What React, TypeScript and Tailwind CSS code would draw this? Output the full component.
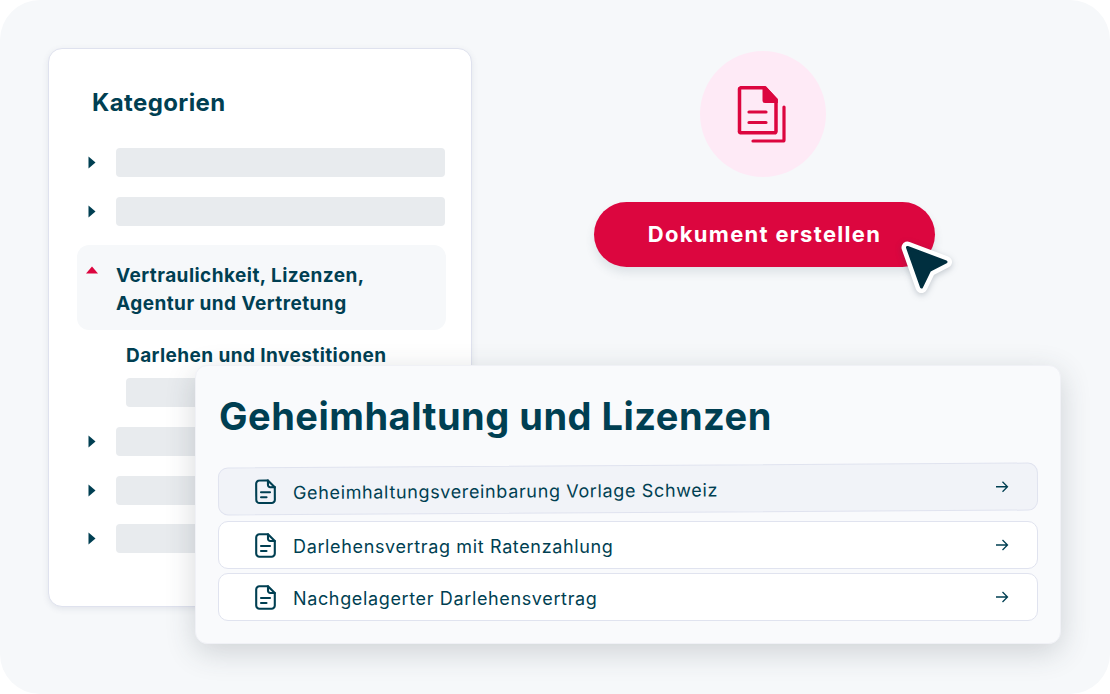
const INK = 'text-[#003f52]'

function Caret() {
  return (
    <svg width="8" height="13" viewBox="0 0 8 13" className="shrink-0">
      <path d="M0.5 0.5 L7.5 6.5 L0.5 12.5 Z" fill="#003f52" />
    </svg>
  )
}

function SkeletonRow() {
  return (
    <div className="flex items-center h-[29px] pl-[39px] pr-[26px]">
      <div className="w-[28px]">
        <Caret />
      </div>
      <div className="flex-1 h-[29px] rounded-[4px] bg-[#e8ebee]" />
    </div>
  )
}

function CategoriesCard() {
  return (
    <div className="w-[424px] h-[559px] shrink-0 rounded-[14px] bg-white border border-[#dfe2ee] shadow-[0_2px_6px_rgba(60,70,110,0.1)] pt-[37px]">
      <h2 className={`pl-[43px] text-[24px] leading-[34px] font-bold tracking-[0.4px] ${INK}`}>Kategorien</h2>
      <div className="mt-[28px] flex flex-col gap-[20px]">
        <SkeletonRow />
        <SkeletonRow />
      </div>
      <div className="mt-[19px] ml-[28px] mr-[25px] h-[85px] rounded-[12px] bg-[#f6f8fa] flex pt-[17px] pl-[9px]">
        <svg width="12" height="8" viewBox="0 0 12 8" className="mt-[4px] shrink-0">
          <path d="M6 0.5 L12 7.5 L0 7.5 Z" fill="#dc063f" />
        </svg>
        <p className={`ml-[18px] text-[19px] leading-[28px] font-bold tracking-[0.45px] ${INK}`}>
          Vertraulichkeit, Lizenzen,
          <br />
          Agentur und Vertretung
        </p>
      </div>
      <p className={`mt-[13px] pl-[77px] text-[19px] leading-[26px] font-bold tracking-[0.42px] ${INK}`}>Darlehen und Investitionen</p>
      <div className="mt-[9px] ml-[77px] mr-[26px] h-[29px] rounded-[4px] bg-[#e8ebee]" />
      <div className="mt-[20px] flex flex-col gap-[19.5px]">
        <SkeletonRow />
        <SkeletonRow />
        <SkeletonRow />
      </div>
    </div>
  )
}

function DocIcon() {
  return (
    <svg width="21" height="25" viewBox="0 0 21 25" fill="none" stroke="#003f52" strokeWidth="2.1" strokeLinecap="round" strokeLinejoin="round" className="shrink-0">
      <path d="M13 1.200 H4.400 A3.200 3.200 0 0 0 1.200 4.400 V20.600 A3.200 3.200 0 0 0 4.400 23.800 H16.600 A3.200 3.200 0 0 0 19.800 20.600 V8 Z" />
      <path d="M13 1.200 V5.800 A2.200 2.200 0 0 0 15.200 8 H19.800" />
      <path d="M6 13 H15 M6 18 H11.500" />
    </svg>
  )
}

function DocRow({ label, active }: { label: string; active?: boolean }) {
  return (
    <div className={`flex items-center h-[48px] pl-[36px] pr-[28px] rounded-[10px] border border-[#e0e3ef] ${active ? 'bg-[#f1f3f8] rotate-[-0.35deg]' : 'bg-white'}`}>
      <DocIcon />
      <span className={`ml-[17px] flex-1 pt-[3px] text-[18px] tracking-[0.64px] ${INK}`}>{label}</span>
      <svg width="14" height="14" viewBox="0 0 14 14" fill="none" stroke="#003f52" strokeWidth="1.3" className="shrink-0">
        <path d="M1 7 H12.500 M7.500 2 L12.500 7 L7.500 12" />
      </svg>
    </div>
  )
}

export default function App() {
  return (
    <div className="relative w-[1110px] h-[694px] overflow-hidden bg-white font-['Inter',sans-serif]">
      <div className="w-[1110px] h-[694px] rounded-[40px] bg-[#f6f8fa] flex pt-[48px] pl-[48px]">
        <CategoriesCard />
        <div className="flex-1 flex flex-col items-center pt-[3px] pr-[56px]">
          <div className="w-[126px] h-[126px] rounded-full bg-[#feeaf6] flex items-center justify-center">
            <svg width="60" height="64" viewBox="0 0 60 64" fill="none">
              <path d="M7.500 5.800 H32 L43 18 V49 A1.500 1.500 0 0 1 41.500 50.800 H7.500 A1.500 1.500 0 0 1 6.500 49 V7.500 A1.500 1.500 0 0 1 7.500 5.800 Z" stroke="#dc063f" strokeWidth="3.500" strokeLinejoin="round" />
              <path d="M29.500 4.500 H33 L44.800 17 V21 H32 A2.500 2.500 0 0 1 29.500 18.500 Z" fill="#dc063f" />
              <path d="M16 30 H33 M16 40.500 H33" stroke="#dc063f" strokeWidth="3.200" strokeLinecap="round" />
              <path d="M51 25 V58 A1 1 0 0 1 50 59 H20" stroke="#dc063f" strokeWidth="3.200" strokeLinecap="round" />
            </svg>
          </div>
          <div className="mt-[25px] ml-[3px] w-[341px] h-[65px] rounded-full bg-[#dc063f] shadow-[0_6px_10px_rgba(60,80,100,0.12)] flex items-center justify-center">
            <span className="text-[22px] font-bold tracking-[1.3px] text-white">Dokument erstellen</span>
          </div>
        </div>
      </div>

      {/* cursor over the button */}
      <svg className="absolute left-[895px] top-[235px]" width="65" height="65" viewBox="0 0 65 65" fill="none" style={{ filter: 'drop-shadow(0 2px 3px rgba(40,60,80,0.25))' }}>
        <path d="M12.500 12.500 L51 27 L34.500 35.500 L26.500 52 Z" stroke="white" strokeWidth="12" strokeLinejoin="round" />
        <path d="M12.500 12.500 L51 27 L34.500 35.500 L26.500 52 Z" fill="#002f3f" stroke="#002f3f" strokeWidth="3" strokeLinejoin="round" />
      </svg>

      {/* document list card lying over the categories */}
      <div className="absolute left-[195px] top-[365px] w-[866px] h-[279px] rounded-[12px] bg-[#f9fafc] border border-[#f0f1f6] shadow-[0_8px_30px_rgba(50,60,70,0.2)] px-[22px] pt-[23px]">
        <h1 className={`ml-[1px] text-[38px] leading-[54px] font-bold tracking-[0.5px] ${INK}`}>Geheimhaltung und Lizenzen</h1>
        <div className="mt-[22px] flex flex-col">
          <DocRow label="Geheimhaltungsvereinbarung Vorlage Schweiz" active />
          <div className="h-[8px]" />
          <DocRow label="Darlehensvertrag mit Ratenzahlung" />
          <div className="h-[4px]" />
          <DocRow label="Nachgelagerter Darlehensvertrag" />
        </div>
      </div>
    </div>
  )
}
